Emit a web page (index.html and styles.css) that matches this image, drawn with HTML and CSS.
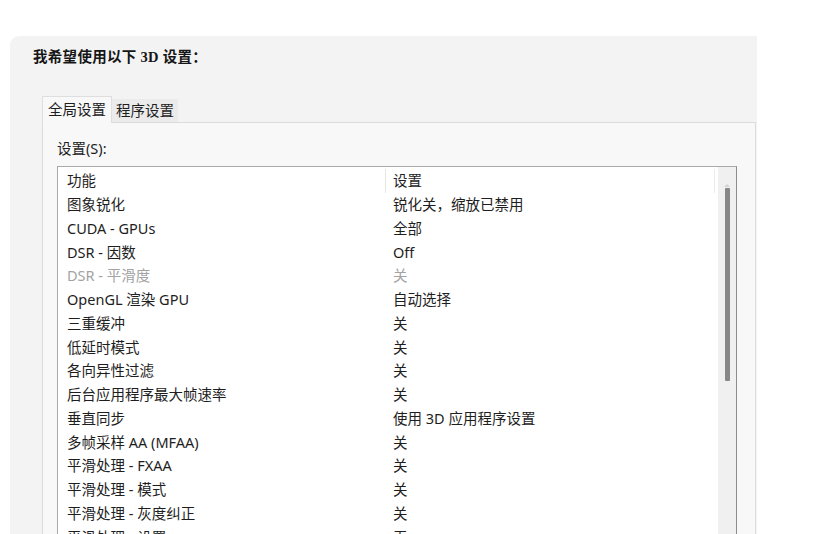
FILE: index.html
```html
<!DOCTYPE html>
<html lang="zh-CN">
<head>
<meta charset="utf-8">
<title>3D 设置</title>
<link rel="stylesheet" href="styles.css">
</head>
<body>
<div class="window">
  <h1 class="title">我希望使用以下 3D 设置：</h1>
  <div class="tabs">
    <div class="tab active">全局设置</div>
    <div class="tab">程序设置</div>
  </div>
  <div class="tabpage">
    <div class="label">设置(S):</div>
    <div class="listbox">
      <div class="list">
        <div class="row head"><span class="c1">功能</span><span class="c2">设置</span></div>
        <div class="row"><span class="c1">图象锐化</span><span class="c2">锐化关，缩放已禁用</span></div>
        <div class="row"><span class="c1">CUDA - GPUs</span><span class="c2">全部</span></div>
        <div class="row"><span class="c1">DSR - 因数</span><span class="c2">Off</span></div>
        <div class="row disabled"><span class="c1">DSR - 平滑度</span><span class="c2">关</span></div>
        <div class="row"><span class="c1">OpenGL 渲染 GPU</span><span class="c2">自动选择</span></div>
        <div class="row"><span class="c1">三重缓冲</span><span class="c2">关</span></div>
        <div class="row"><span class="c1">低延时模式</span><span class="c2">关</span></div>
        <div class="row"><span class="c1">各向异性过滤</span><span class="c2">关</span></div>
        <div class="row"><span class="c1">后台应用程序最大帧速率</span><span class="c2">关</span></div>
        <div class="row"><span class="c1">垂直同步</span><span class="c2">使用 3D 应用程序设置</span></div>
        <div class="row"><span class="c1">多帧采样 AA (MFAA)</span><span class="c2">关</span></div>
        <div class="row"><span class="c1">平滑处理 - FXAA</span><span class="c2">关</span></div>
        <div class="row"><span class="c1">平滑处理 - 模式</span><span class="c2">关</span></div>
        <div class="row"><span class="c1">平滑处理 - 灰度纠正</span><span class="c2">关</span></div>
        <div class="row"><span class="c1">平滑处理 - 设置</span><span class="c2">无</span></div>
      </div>
      <div class="scrollbar">
        <div class="arrow"></div>
        <div class="thumb"></div>
      </div>
    </div>
  </div>
</div>
</body>
</html>
```

FILE: styles.css
```css
html, body {
  margin: 0;
  padding: 0;
}

body {
  width: 835px;
  height: 534px;
  overflow: hidden;
  background: #ffffff;
  font-family: "Noto Sans", "Noto Sans CJK SC", sans-serif;
  font-size: 14.5px;
  color: #1e1e1e;
}

.window {
  margin: 36px 0 0 10px;
  width: 747px;
  height: 520px;
  background: #f3f3f3;
  border-top-left-radius: 9px;
  padding-top: 11px;
  box-sizing: border-box;
}

.title {
  margin: 0 0 0 23px;
  font-family: "Liberation Serif", "Noto Sans CJK SC", serif;
  font-size: 14.5px;
  font-weight: bold;
  line-height: 20px;
  color: #161616;
  letter-spacing: 0.3px;
}

.tabs {
  display: flex;
  align-items: flex-end;
  margin: 29px 0 0 32px;
  height: 26px;
  position: relative;
  z-index: 1;
}

.tab {
  line-height: 20px;
  height: 23px;
  padding: 1px 4px 0 4px;
  box-sizing: border-box;
  background: #ebebeb;
  white-space: nowrap;
}

.tab.active {
  height: 27px;
  width: 70px;
  padding: 2px 5px 0 5px;
  margin-bottom: -1px;
  background: #f8f8f8;
  border: 1px solid #dedede;
  border-bottom: none;
}

.tabpage {
  margin-left: 32px;
  width: 714px;
  height: 420px;
  box-sizing: border-box;
  background: #f8f8f8;
  border: 1px solid #dcdcdc;
  padding: 15px 0 0 14px;
}

.label {
  line-height: 20px;
  height: 20px;
  margin-bottom: 8px;
}

.listbox {
  display: flex;
  width: 680px;
  height: 400px;
  box-sizing: border-box;
  background: #ffffff;
  border: 1px solid #a9a9a9;
  border-right-color: #8c8c8c;
}

.list {
  flex: 1;
  min-width: 0;
}

.row {
  display: flex;
  height: 23.75px;
  line-height: 23.75px;
  white-space: nowrap;
}

.row .c1 {
  width: 328px;
  padding-left: 9px;
  box-sizing: border-box;
}

.row .c2 {
  flex: 1;
  padding-left: 7px;
}

.row.head {
  height: 26px;
  line-height: 23px;
  padding-top: 2px;
  box-sizing: border-box;
  padding-right: 3px;
}

.row.head .c1 {
  border-right: 1px solid #e6e6e6;
}

.row.head .c2 {
  border-right: 1px solid #ececec;
}

.row.disabled {
  color: #a3a3a3;
}

.scrollbar {
  width: 18px;
  background: #f0f0f0;
  display: flex;
  flex-direction: column;
  align-items: center;
}

.arrow {
  margin-top: 17px;
  width: 0;
  height: 0;
  border-left: 3px solid transparent;
  border-right: 3px solid transparent;
  border-bottom: 3px solid #d4d4d4;
}

.thumb {
  margin-top: 1px;
  width: 5px;
  height: 193px;
  background: #878787;
  border-radius: 1px;
}
```
